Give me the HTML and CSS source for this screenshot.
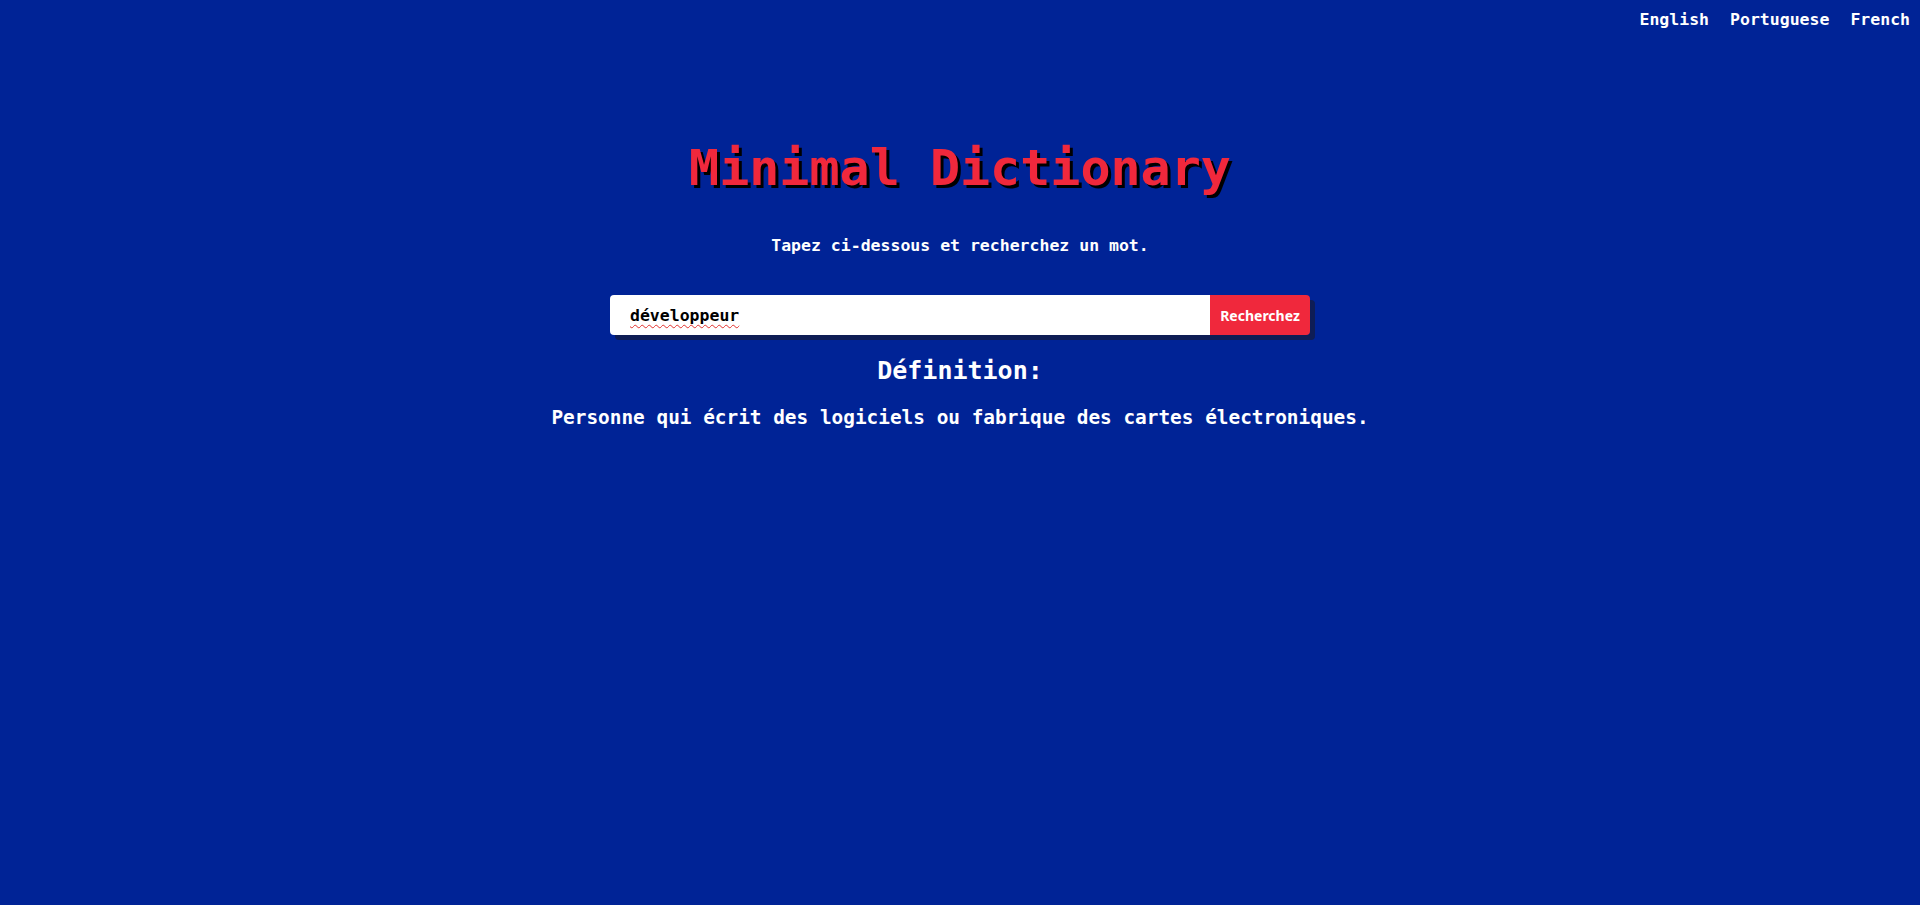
FILE: index.html
```html
<!DOCTYPE html>
<html lang="fr">
<head>
<meta charset="utf-8">
<title>Minimal Dictionary</title>
<link rel="stylesheet" href="styles.css">
</head>
<body>
<nav class="langs">
  <a class="lang" href="#">English</a>
  <a class="lang" href="#">Portuguese</a>
  <a class="lang" href="#">French</a>
</nav>
<main class="page">
  <h1 class="title">Minimal Dictionary</h1>
  <p class="subtitle">Tapez ci-dessous et recherchez un mot.</p>
  <form class="search">
    <div class="search-field">
      <input class="search-input" type="text" value="développeur">
      <span class="spell" aria-hidden="true">développeur</span>
    </div>
    <button class="search-btn" type="button">Recherchez</button>
  </form>
  <h2 class="def-title">Définition:</h2>
  <p class="def-text">Personne qui écrit des logiciels ou fabrique des cartes électroniques.</p>
</main>
</body>
</html>
```

FILE: styles.css
```css
html, body {
  margin: 0;
  padding: 0;
}
body {
  background: #002396;
  color: #ffffff;
  font-family: "DejaVu Sans Mono", "Liberation Mono", monospace;
  font-weight: bold;
  min-height: 905px;
}
.langs {
  display: flex;
  justify-content: flex-end;
  gap: 21px;
  padding: 10px 10px 0 0;
  height: 30px;
}
.lang {
  color: #ffffff;
  text-decoration: none;
  font-size: 16.5px;
  line-height: 20px;
}
.page {
  display: flex;
  flex-direction: column;
  align-items: center;
}
.title {
  margin: 98px 0 0 0;
  font-size: 50px;
  line-height: 60px;
  color: #f0283c;
  text-shadow: 3px 3px 0 #000000;
  font-weight: bold;
}
.subtitle {
  margin: 38px 0 0 0;
  font-size: 16.5px;
  line-height: 20px;
}
.search {
  margin-top: 39px;
  display: flex;
  width: 700px;
  height: 40px;
  border-radius: 4px;
  box-shadow: 5px 5px 0 #0e1d55;
}
.search-field {
  position: relative;
  flex: 1;
  display: flex;
}
.search-input {
  flex: 1;
  border: none;
  outline: none;
  margin: 0;
  padding: 0 0 0 20px;
  height: 40px;
  border-radius: 4px 0 0 4px;
  background: #ffffff;
  color: #000000;
  font-family: "DejaVu Sans Mono", "Liberation Mono", monospace;
  font-weight: bold;
  font-size: 16.5px;
}
.spell {
  position: absolute;
  left: 20px;
  top: 0;
  line-height: 40px;
  font-size: 16.5px;
  color: transparent;
  pointer-events: none;
  text-decoration: underline wavy #e0302c;
  text-decoration-thickness: 1px;
  text-underline-offset: 4px;
}
.search-btn {
  width: 100px;
  height: 40px;
  border: none;
  margin: 0;
  padding: 0;
  border-radius: 0 4px 4px 0;
  background: #f0283c;
  color: #ffffff;
  font-family: "Noto Sans", "DejaVu Sans", sans-serif;
  font-weight: bold;
  font-size: 14px;
}
.def-title {
  margin: 21px 0 0 0;
  font-size: 25px;
  line-height: 30px;
}
.def-text {
  margin: 20px 0 0 0;
  font-size: 19.4px;
  line-height: 24px;
}
```
